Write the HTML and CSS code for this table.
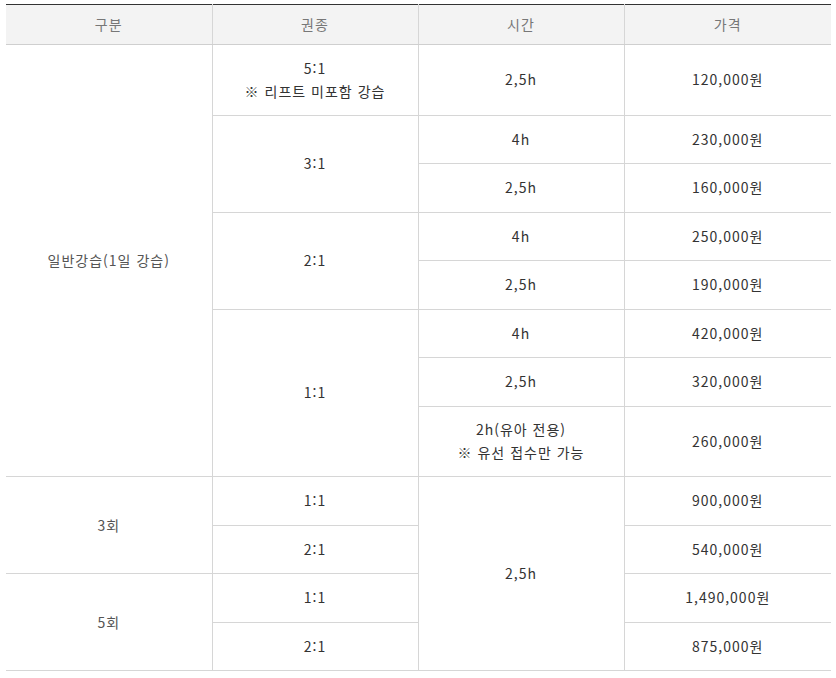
FILE: index.html
```html
<!DOCTYPE html>
<html lang="ko">
<head>
<meta charset="utf-8">
<link rel="stylesheet" href="styles.css">
</head>
<body>
<div class="wrap">
<table class="price">
  <colgroup><col class="c1"><col class="c2"><col class="c3"><col class="c4"></colgroup>
  <thead>
    <tr><th>구분</th><th>권종</th><th>시간</th><th>가격</th></tr>
  </thead>
  <tbody>
    <tr class="dbl">
      <td rowspan="8" class="first">일반강습(1일 강습)</td>
      <td>5:1<br>※ 리프트 미포함 강습</td>
      <td>2,5h</td>
      <td>120,000원</td>
    </tr>
    <tr><td rowspan="2">3:1</td><td>4h</td><td>230,000원</td></tr>
    <tr><td>2,5h</td><td>160,000원</td></tr>
    <tr><td rowspan="2">2:1</td><td>4h</td><td>250,000원</td></tr>
    <tr><td>2,5h</td><td>190,000원</td></tr>
    <tr><td rowspan="3">1:1</td><td>4h</td><td>420,000원</td></tr>
    <tr><td>2,5h</td><td>320,000원</td></tr>
    <tr class="dbl"><td>2h(유아 전용)<br>※ 유선 접수만 가능</td><td>260,000원</td></tr>
    <tr><td rowspan="2" class="first">3회</td><td>1:1</td><td rowspan="4">2,5h</td><td>900,000원</td></tr>
    <tr><td>2:1</td><td>540,000원</td></tr>
    <tr><td rowspan="2" class="first">5회</td><td>1:1</td><td>1,490,000원</td></tr>
    <tr><td>2:1</td><td>875,000원</td></tr>
  </tbody>
</table>
</div>
</body>
</html>
```
FILE: styles.css
```css
html, body {
  margin: 0;
  padding: 0;
  background: #fff;
}
.wrap {
  padding: 4px 5px 0 6px;
}
.price {
  width: 825px;
  border-collapse: collapse;
  table-layout: fixed;
  font-family: "Noto Sans CJK KR", "Noto Sans", sans-serif;
  font-size: 14px;
  letter-spacing: 1px;
  line-height: 23px;
  color: #333;
  border-top: 1px solid #333;
}
.price .c1, .price .c2, .price .c3 {
  width: 206px;
}
.price .c4 {
  width: 207px;
}
.price th {
  height: 39px;
  padding: 0;
  background: #f3f3f3;
  color: #777;
  font-weight: normal;
  border-bottom: 1px solid #cfcfcf;
  border-left: 1px solid #d6d6d6;
  text-align: center;
  vertical-align: middle;
}
.price th:first-child {
  border-left: none;
}
.price td {
  height: 47.5px;
  padding: 0;
  text-align: center;
  vertical-align: middle;
  border-bottom: 1px solid #d6d6d6;
  border-left: 1px solid #d6d6d6;
}
.price tr.dbl td {
  height: 69.5px;
}
.price td.first {
  border-left: none;
  color: #555;
}
```
